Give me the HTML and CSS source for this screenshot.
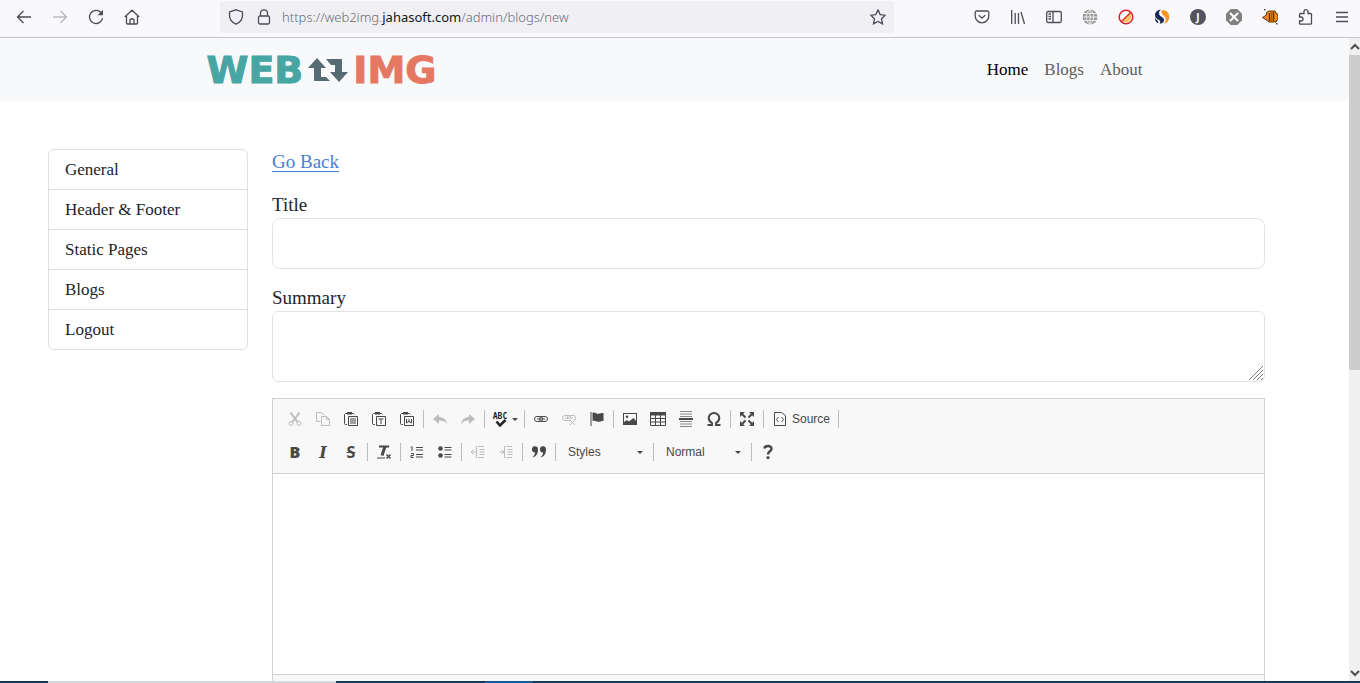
FILE: index.html
```html
<!DOCTYPE html>
<html lang="en">
<head>
    <meta charset="UTF-8">
    <meta name="viewport" content="width=device-width, initial-scale=1.0">
    <title>New Blog</title>
    <link rel="stylesheet" href="styles.css">
</head>
<body>

    <!-- browser bar -->
    <div class="browser-bar">
        <div class="browser-icons">
            <button type="button" aria-label="Back"><svg viewBox="0 0 16 16"><path d="M15 8H1.5M7.500 2 1.500 8l6 6"/></svg></button>
            <button type="button" aria-label="Forward" class="faded"><svg viewBox="0 0 16 16"><path d="M1 8h13.500M8.500 2l6 6-6 6"/></svg></button>
            <button type="button" aria-label="Reload"><svg viewBox="0 0 16 16"><path d="M13 3.500A6.600 6.600 0 1 0 14.600 9"/><path class="fill" d="M15 .8v5.400H9.600z"/></svg></button>
            <button type="button" aria-label="Home"><svg viewBox="0 0 16 16"><path d="M.8 8 8 1.200 15.200 8M2.500 7v7a1 1 0 0 0 1 1h9a1 1 0 0 0 1-1V7M6 15v-4a1 1 0 0 1 1-1h2a1 1 0 0 1 1 1v4"/></svg></button>
        </div>
        <div class="url-bar">
            <svg viewBox="0 0 16 16"><path d="M8 .8 14.500 3v3.500c0 4-2.500 7-6.500 8.700C4 13.500 1.500 10.500 1.500 6.500V3z"/></svg>
            <svg viewBox="0 0 16 16"><rect x="2.500" y="7" width="11" height="8" rx="1.500"/><path d="M4.500 7V4.300a3.500 3.500 0 0 1 7 0V7"/></svg>
            <div class="url" role="textbox" contenteditable="true" spellcheck="false" aria-label="Address">https://web2img.<span>jahasoft.com</span>/admin/blogs/new</div>
            <svg viewBox="0 0 16 16"><path d="m8 .9 2.200 4.700 5 .6-3.700 3.500 1 5.200L8 12.400l-4.500 2.500 1-5.200L.8 6.200l5-.6z"/></svg>
        </div>
        <div class="browser-icons">
            <button type="button" aria-label="Pocket"><svg viewBox="0 0 16 16"><path d="M2.500 2h11a1.300 1.300 0 0 1 1.300 1.300V7A6.800 6.800 0 0 1 1.200 7V3.300A1.300 1.300 0 0 1 2.500 2zM4.800 6.200 8 9.200l3.200-3"/></svg></button>
            <button type="button" aria-label="Library"><svg viewBox="0 0 16 16"><path d="M1.700 1v14M5.200 4v11M8.500 4v11M11 3l3.500 12"/></svg></button>
            <button type="button" aria-label="Sidebar"><svg viewBox="0 0 16 16"><rect x=".7" y="2.500" width="14.600" height="11" rx="1.500"/><path d="M7 2.500v11M2.500 5h2.500M2.500 7.500h2.500M2.500 10h2.500"/></svg></button>
            <button type="button" aria-label="Web"><svg viewBox="0 0 16 16"><circle cx="8" cy="8" r="7.500" fill="#999" stroke="none"/><path stroke="#ececf0" stroke-width="1" d="M8 0v16M0 8h16M1 4.500h14M1 11.500h14M8 .5c-5 4-5 11 0 15M8 .5c5 4 5 11 0 15"/></svg></button>
            <button type="button" aria-label="Blocker"><svg viewBox="0 0 16 16"><circle cx="8" cy="8" r="6.800" fill="#fff" stroke="#d8202f" stroke-width="1.500"/><path d="M13 3v7l-3 3H4z" fill="#fbc55c" stroke="none"/><path stroke="#d8202f" d="M3.200 12.800 12.800 3.200"/></svg></button>
            <button type="button" aria-label="SEO"><svg viewBox="0 0 16 16"><path fill="#1b2c57" stroke="none" d="M7 .8C3 .8 1 3.500 1 6c0 3 2 4.200 4 5 1.500.7 1.800 2 .5 3.500 3.500.2 5-2 4.500-4.300C9.300 8 5 7.500 5 4.300 5 2.800 5.700 1.600 7 .8zM1 8.800c-.3 2.700 1 4.700 3.300 5.500.5-1.600-.3-2.300-1.500-3.200C2 10.500 1.300 9.800 1 8.800z"/><path fill="#f7941d" stroke="none" d="M8.300 1c4 0 6.900 2.800 6.900 6.700 0 3.800-2.200 6.500-5.200 7.100 2.300-2.600 2.600-5.100.7-7.300C9.300 5.900 6 4 8.300 1z"/></svg></button>
            <button type="button" aria-label="Account"><svg viewBox="0 0 16 16"><circle cx="8" cy="8" r="8" fill="#54535f" stroke="none"/><text x="8" y="11.500" class="badge-letter">J</text></svg></button>
            <button type="button" aria-label="Close"><svg viewBox="0 0 16 16"><path fill="#808080" stroke="none" d="M4.700 0h6.600L16 4.700v6.600L11.300 16H4.700L0 11.300V4.700z"/><path stroke="#fff" stroke-width="2" d="m4 4 8 8M12 4l-8 8"/></svg></button>
            <button type="button" aria-label="Fish"><svg viewBox="0 0 16 16"><path fill="#f08c14" stroke="#5a3010" stroke-width="1" d="m.5 8.500 4-2.500V3.500L7 2h6l1.500 3H16v5l-2 3H7L4.500 11z"/><path stroke="#5a3010" d="M7.500 4v8M11.500 3v9"/><path stroke="#d8420c" d="M9.500 3v10"/><path class="fill" d="M2 0h1.500v1.500H2zM14 14h1.500v1.500H14z"/></svg></button>
            <button type="button" aria-label="Extensions"><svg viewBox="0 0 16 16"><path d="M2 15.200h10.500a1 1 0 0 0 1-1V5.500a1 1 0 0 0-1-1H10V2.700a2 2 0 0 0-4 0v1.800H2.500a1 1 0 0 0-1 1V8H3a1.700 1.700 0 0 1 0 4H1.500v2.700z"/></svg></button>
            <button type="button" aria-label="Menu"><svg viewBox="0 0 16 16"><path d="M2 3.500h12M2 8h12M2 12.500h12"/></svg></button>
        </div>
    </div>

    <div class="window">
        <div class="page">
            <header class="navbar">
                <div class="navbar-inner">
                    <a href="#" class="logo">
                        <span class="logo-web">WEB</span>
                        <svg viewBox="0 0 40 24"><path d="M9 0 18 10h-5v9h5l4 4H6V10H0z"/><path d="M18 1h16v13h6l-9 10-9-10h5V7h-4z"/></svg>
                        <span class="logo-img">IMG</span>
                    </a>
                    <nav>
                        <a href="#" class="active">Home</a>
                        <a href="#">Blogs</a>
                        <a href="#">About</a>
                    </nav>
                </div>
            </header>

            <div class="content">
                <aside class="menu">
                    <a href="#">General</a>
                    <a href="#">Header &amp; Footer</a>
                    <a href="#">Static Pages</a>
                    <a href="#">Blogs</a>
                    <a href="#">Logout</a>
                </aside>

                <form class="blog-form">
                    <a href="#" class="go-back">Go Back</a>

                    <div class="field">
                        <label for="title">Title</label>
                        <input type="text" id="title">
                    </div>
                    <div class="field">
                        <label for="summary">Summary</label>
                        <div class="textarea-wrap">
                            <textarea id="summary"></textarea>
                            <svg class="grip" viewBox="0 0 16 16"><path d="M1 15 15 1M5 15 15 5M9 15l6-6M13 15l2-2"/></svg>
                        </div>
                    </div>

                    <div class="editor">
                        <div class="toolbar">
                            <div class="tool-row">
                                <button type="button" disabled aria-label="Cut"><svg viewBox="0 0 16 16"><path stroke-width="2" d="m3.500 1.500 7 9.500M12.500 1.500l-7 9.500"/><circle cx="4" cy="12.500" r="2"/><circle cx="12" cy="12.500" r="2"/></svg></button>
                                <button type="button" disabled aria-label="Copy"><svg viewBox="0 0 16 16"><path d="M5.500 10.500h-4v-9h5l3 3M6.500 5.500h5l3 3v6h-8zM11.500 5.500v3h3"/></svg></button>
                                <button type="button" aria-label="Paste"><svg viewBox="0 0 16 16"><path d="M4 13.500H2.500a1 1 0 0 1-1-1v-9l1-1h8l1 1M5.500 5.500h9v9h-9zM7 8h6M7 10h6M7 12h6"/><path class="fill" d="M4 1h5v2.500H4z"/></svg></button>
                                <button type="button" aria-label="Paste as text"><svg viewBox="0 0 16 16"><path d="M4 13.500H2.500a1 1 0 0 1-1-1v-9l1-1h8l1 1M5.500 5.500h9v9h-9zM7.500 8h5M10 8v5"/><path class="fill" d="M4 1h5v2.500H4z"/></svg></button>
                                <button type="button" aria-label="Paste from Word"><svg viewBox="0 0 16 16"><path d="M4 13.500H2.500a1 1 0 0 1-1-1v-9l1-1h8l1 1M5.500 5.500h9v9h-9zM7.500 8v4l2.500-1.500 2.500 1.500V8M10 8v3"/><path class="fill" d="M4 1h5v2.500H4z"/></svg></button>
                                <span class="sep"></span>
                                <button type="button" disabled aria-label="Undo"><svg viewBox="0 0 16 16"><path class="fill" d="m1 8 6-5v3c4 0 7 2 8 7-2-2.500-4-3.500-8-3.500V13z"/></svg></button>
                                <button type="button" disabled aria-label="Redo"><svg viewBox="0 0 16 16"><path class="fill" d="M15 8 9 3v3c-4 0-7 2-8 7 2-2.500 4-3.500 8-3.500V13z"/></svg></button>
                                <span class="sep"></span>
                                <button type="button" class="spell" aria-label="Spell check"><svg viewBox="0 0 16 16"><text x="8" y="8" class="abc">ABC</text><path stroke="#222" stroke-width="2.500" d="m4.500 10.500 3.500 4L13.500 9"/></svg><i class="caret"></i></button>
                                <span class="sep"></span>
                                <button type="button" aria-label="Link"><svg viewBox="0 0 16 16"><rect x="1.500" y="5.500" width="8" height="5" rx="2.500"/><rect x="6.500" y="5.500" width="8" height="5" rx="2.500"/><path d="M4 8h8"/></svg></button>
                                <button type="button" disabled aria-label="Unlink"><svg viewBox="0 0 16 16"><path d="M9 9.500H4a2 2 0 0 1 0-5h3.500a2 2 0 0 1 2 2.500M6.500 8V6a2 2 0 0 1 2-1.500H12a2 2 0 0 1 1 4.500M4 7h8M9 9l5 5M14 9l-5 5"/></svg></button>
                                <button type="button" aria-label="Anchor"><svg viewBox="0 0 16 16"><path d="M2 1v14"/><path class="fill" d="M3.500 2c3-1.500 4 1.500 6 .8 1.500-.6 3-.8 5-.8v8c-2 0-3 .2-4.500.7-2 .8-3.500-1.700-6.500-.7z"/></svg></button>
                                <span class="sep"></span>
                                <button type="button" aria-label="Image"><svg viewBox="0 0 16 16"><rect x="1.500" y="2.500" width="13" height="11"/><path class="fill" d="m2 13 0-2 3-2 2 1.500L11.500 7l2.500 3v3z"/><circle class="fill" cx="5" cy="5.800" r="1.300"/></svg></button>
                                <button type="button" aria-label="Table"><svg viewBox="0 0 16 16"><path d="M.5 1.500h15v13H.5zM.5 7.500h15M.5 11h15M5.500 4v11M10.500 4v11"/><path class="fill" d="M0 1h16v3.500H0z"/></svg></button>
                                <button type="button" aria-label="Horizontal line"><svg viewBox="0 0 16 16"><path stroke="#888" d="M2 .5h12M2 3h12M2 5.500h12M2 10.500h12M2 13h12M2 15.500h12"/><path stroke-width="2" d="M1 8h14"/></svg></button>
                                <button type="button" aria-label="Special character"><svg viewBox="0 0 16 16"><path stroke-width="2" d="M1.500 14H6v-2C3.500 10.500 2.700 9 2.700 7a5.300 5 0 0 1 10.600 0c0 2-.8 3.500-3.300 5v2h4.500"/></svg></button>
                                <span class="sep"></span>
                                <button type="button" aria-label="Maximize"><svg viewBox="0 0 16 16"><path stroke-width="2" d="M2.500 2.500 6.500 6.500M13.500 2.500l-4 4M2.500 13.500l4-4M13.500 13.500l-4-4"/><path class="fill" d="M1 1h5L1 6zM15 1v5l-5-5zM1 15v-5l5 5zM15 15h-5l5-5z"/></svg></button>
                                <span class="sep"></span>
                                <button type="button" class="source"><svg viewBox="0 0 16 16"><path d="M2.500 1.500h7l4 3v10h-11zM6.500 6 4.500 8.500l2 2.500M9.500 6l2 2.500-2 2.500"/></svg>Source</button>
                                <span class="sep"></span>
                            </div>
                            <div class="tool-row">
                                <button type="button" class="letter" aria-label="Bold"><b>B</b></button>
                                <button type="button" class="letter" aria-label="Italic"><i class="serif">I</i></button>
                                <button type="button" class="letter" aria-label="Strikethrough"><s>S</s></button>
                                <span class="sep"></span>
                                <button type="button" aria-label="Remove format"><svg viewBox="0 0 16 16"><path stroke-width="2" d="M3 2.500h10"/><path stroke-width="3" d="m9 2.500-3 9"/><path d="M1 14h8"/><path stroke-width="1.500" d="m10.500 10.500 4 4M14.500 10.500l-4 4"/></svg></button>
                                <span class="sep"></span>
                                <button type="button" aria-label="Numbered list"><svg viewBox="0 0 16 16"><path d="M7 3.500h7M7 6h7M7 10.500h7M7 13h7M2 3.500l1-1V7M2 9.500h2.500v2H2v2h2.500"/></svg></button>
                                <button type="button" aria-label="Bulleted list"><svg viewBox="0 0 16 16"><path d="M7.500 3.500h7M7.500 6h7M7.500 10.500h7M7.500 13h7"/><circle class="fill" cx="3.500" cy="4.500" r="2.300"/><circle class="fill" cx="3.500" cy="11.500" r="2.300"/></svg></button>
                                <span class="sep"></span>
                                <button type="button" disabled aria-label="Decrease indent"><svg viewBox="0 0 16 16"><path d="M8 2.500h6M9.500 5.500h5M9.500 8h5M9.500 10.500h5M8 13.500h6M6.500 2v12M6 8H1M3.500 5.500 1 8l2.500 2.500"/></svg></button>
                                <button type="button" disabled aria-label="Increase indent"><svg viewBox="0 0 16 16"><path d="M8 2.500h6M9.500 5.500h5M9.500 8h5M9.500 10.500h5M8 13.500h6M6.500 2v12M1 8h5M3.500 5.500 6 8l-2.500 2.500"/></svg></button>
                                <span class="sep"></span>
                                <button type="button" aria-label="Block quote"><svg viewBox="0 0 16 16"><path class="fill" d="M1 5.500a3 3 0 0 1 6-.5c.3 4-1.500 7-4.500 8.500l-.5-.7c1.500-1.300 2-2.500 2-4.300-2 0-3-1.300-3-3zM9 5.500a3 3 0 0 1 6-.5c.3 4-1.500 7-4.500 8.500l-.5-.7c1.500-1.300 2-2.500 2-4.300-2 0-3-1.300-3-3z"/></svg></button>
                                <span class="sep"></span>
                                <span class="combo"><select aria-label="Styles"><option>Styles</option></select><i class="caret"></i></span>
                                <span class="sep"></span>
                                <span class="combo"><select aria-label="Paragraph format"><option>Normal</option></select><i class="caret"></i></span>
                                <span class="sep"></span>
                                <button type="button" aria-label="About the editor"><svg viewBox="0 0 16 16"><path stroke-width="2.500" d="M4.300 4.500C5 1.500 11.500 1 11.500 4.800 11.500 7.500 8 7 8 10.500"/><path class="fill" d="M6.600 12.300h2.800V15H6.600z"/></svg></button>
                            </div>
                        </div>
                        <div class="editor-body" contenteditable="true" role="textbox" aria-multiline="true" aria-label="Blog content"></div>
                        <div class="editor-footer"></div>
                    </div>
                </form>
            </div>
        </div>

        <div class="scrollbar">
            <svg viewBox="0 0 11 17"><path d="m2 11 4-4 4 4"/></svg>
            <div class="thumb"></div>
            <svg viewBox="0 0 11 17"><path d="m2 7 4 4 4-4"/></svg>
        </div>
    </div>

    <div class="taskbar">
        <span class="task-open"></span>
        <span class="task-active"></span>
    </div>

</body>
</html>
```
FILE: styles.css
```css
* {
    box-sizing: border-box;
}
body {
    margin: 0;
    height: 100vh;
    display: flex;
    flex-direction: column;
    overflow: hidden;
    background: #fff;
    font-family: "Liberation Serif", serif;
    font-size: 17px;
    color: #212529;
}
button {
    display: flex;
    align-items: center;
    justify-content: center;
    padding: 0;
    border: 0;
    background: none;
    color: inherit;
}
svg {
    flex: none;
    width: 16px;
    height: 16px;
    fill: none;
    stroke: currentColor;
}
svg .fill {
    fill: currentColor;
    stroke: none;
}

/* browser bar */
.browser-bar {
    flex: none;
    display: flex;
    height: 38px;
    padding: 1px 0 4px 6px;
    background: #f9f9fb;
    border-bottom: 1px solid #c4c5cc;
    color: #4c4b57;
}
.browser-bar svg {
    stroke-width: 1.3;
}
.browser-icons {
    display: flex;
}
.browser-icons button {
    width: 36px;
}
.browser-icons .faded {
    color: #b9b9c0;
}
.badge-letter {
    font: bold 10px "Open Sans", sans-serif;
    text-anchor: middle;
    fill: #fff;
    stroke: none;
}
.url-bar {
    flex: 1;
    display: flex;
    align-items: center;
    gap: 12px;
    margin: 0 70px;
    padding: 0 8px;
    background: #f0f0f4;
    border-radius: 4px;
}
.url {
    flex: 1;
    margin-left: -2px;
    font-family: "Noto Sans", sans-serif;
    font-size: 13px;
    font-weight: 300;
    color: #6b6b75;
    white-space: nowrap;
}
.url span {
    font-weight: 400;
    color: #15141a;
}

/* page */
.window {
    flex: 1;
    display: flex;
    min-height: 0;
}
.page {
    flex: 1;
    overflow: hidden;
}
.navbar {
    padding: 0 20px;
    background: #f8f9fa;
}
.navbar-inner {
    display: flex;
    align-items: center;
    justify-content: space-between;
    max-width: 936px;
    height: 63px;
    margin: 0 auto;
}
.logo {
    display: flex;
    align-items: center;
    gap: 5px;
    font-family: "DejaVu Sans", sans-serif;
    font-size: 38px;
    font-weight: 700;
    line-height: 40px;
    text-decoration: none;
    -webkit-text-stroke: 1px;
}
.logo svg {
    width: 40px;
    height: 24px;
    fill: #566a74;
    stroke: none;
}
.logo-web {
    color: #47a5a3;
}
.logo-img {
    color: #e57862;
}
nav {
    display: flex;
    gap: 16px;
}
nav a {
    color: #5c5d5e;
    text-decoration: none;
}
nav .active {
    color: #000;
}
.content {
    display: flex;
    align-items: flex-start;
    gap: 24px;
    padding: 48px 84px 48px 48px;
}
.menu {
    flex: none;
    width: 200px;
    border: 1px solid #dfdfdf;
    border-radius: 6px;
}
.menu a {
    display: block;
    padding: 0 16px;
    line-height: 39px;
    color: #212529;
    text-decoration: none;
}
.menu a + a {
    border-top: 1px solid #dfdfdf;
}
.blog-form {
    flex: 1;
    min-width: 0;
    font-size: 19px;
}
.go-back {
    display: inline-block;
    margin-bottom: 17px;
    line-height: 26px;
    color: #4a7fd6;
    text-underline-offset: 3px;
}
.field {
    margin-bottom: 16px;
}
.field label {
    display: block;
    line-height: 26px;
}
.field input,
.field textarea {
    display: block;
    width: 100%;
    height: 51px;
    padding: 8px 12px;
    background: #fff;
    border: 1px solid #e2e3e5;
    border-radius: 8px;
    font: inherit;
}
.field textarea {
    height: 71px;
    border-radius: 6px;
    resize: none;
}
.textarea-wrap {
    position: relative;
}
.grip {
    position: absolute;
    right: 1px;
    bottom: 1px;
    color: #777;
}

/* editor */
.editor {
    border: 1px solid #d1d1d1;
    font-family: "Liberation Sans", Arial, sans-serif;
    font-size: 12px;
    color: #484848;
}
.toolbar {
    display: flex;
    flex-direction: column;
    gap: 5px;
    padding: 6px 8px 7px;
    background: #f8f8f8;
    border-bottom: 1px solid #d1d1d1;
}
.tool-row {
    display: flex;
    align-items: center;
    height: 28px;
}
.tool-row button {
    width: 28px;
    height: 28px;
    font: inherit;
}
.tool-row button:disabled {
    color: #bcbcbc;
}
.sep {
    width: 1px;
    height: 18px;
    margin: 0 2px;
    background: #bcbcbc;
}
.tool-row .letter {
    font-family: "Open Sans", sans-serif;
    font-size: 16px;
    font-weight: 700;
}
.letter .serif {
    font-family: "DejaVu Serif", serif;
    font-weight: 700;
}
.abc {
    font: bold 8px "DejaVu Sans Mono", monospace;
    text-anchor: middle;
    fill: #222;
    stroke: none;
}
.spell svg {
    overflow: visible;
}
.tool-row .spell {
    width: 35px;
    gap: 4px;
}
.tool-row .source {
    width: 70px;
    gap: 4px;
}
.caret {
    border: 3px solid transparent;
    border-top-color: #484848;
    border-bottom: 0;
}
.combo {
    position: relative;
    width: 93px;
}
.combo select {
    width: 100%;
    height: 28px;
    padding: 0 10px;
    appearance: none;
    background: none;
    border: 0;
    font: inherit;
    color: inherit;
}
.combo .caret {
    position: absolute;
    top: 13px;
    right: 8px;
}
.editor-body {
    height: 200px;
    background: #fff;
}
.editor-footer {
    height: 30px;
    background: #f8f8f8;
    border-top: 1px solid #d1d1d1;
}

/* scrollbar and taskbar */
.scrollbar {
    flex: none;
    display: flex;
    flex-direction: column;
    width: 11px;
    background: #f0f0f0;
    color: #505050;
}
.scrollbar svg {
    width: 11px;
    height: 17px;
    stroke-width: 2;
}
.thumb {
    height: 49%;
    background: #cdcdcd;
}
.scrollbar svg:last-child {
    margin-top: auto;
}
.taskbar {
    flex: none;
    display: flex;
    gap: 149px;
    height: 2px;
    padding-left: 48px;
    background: #12385a;
}
.task-open {
    width: 288px;
    background: #d5d7d9;
}
.task-active {
    width: 48px;
    background: #125b9a;
}
```
